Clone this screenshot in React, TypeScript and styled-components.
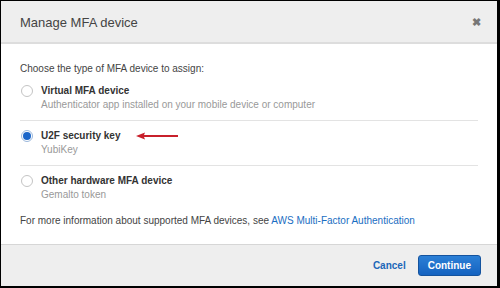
import React from "react";
import styled, { createGlobalStyle } from "styled-components";

const Global = createGlobalStyle`
  html, body {
    margin: 0;
    padding: 0;
    background: #000;
  }
  body {
    font-family: "Liberation Sans", Arial, sans-serif;
  }
`;

const Modal = styled.div`
  box-sizing: border-box;
  width: 500px;
  height: 288px;
  border-style: solid;
  border-color: #000;
  border-width: 1px 3px 2px 1px;
  background: #fff;
  display: flex;
  flex-direction: column;
`;

const Header = styled.div`
  height: 40px;
  background: #eeeeee;
  border-bottom: 2px solid #dddddd;
  display: flex;
  align-items: center;
  justify-content: space-between;
  padding: 1px 16px 0 19px;

  & h2 {
    margin: 0;
    font-weight: 400;
    font-size: 13px;
    color: #444;
  }
`;

const Close = styled.button`
  border: none;
  background: none;
  padding: 0;
  color: #777;
  font-size: 11px;
  font-weight: 700;
  line-height: 1;
  cursor: pointer;
`;

const Body = styled.div`
  flex: 1;
  padding: 18px 19px 0 19px;
  color: #444;
  font-size: 10px;
  line-height: 14px;

  & > p {
    margin: 0;
  }
`;

const Option = styled.label<{ $last?: boolean }>`
  display: flex;
  align-items: flex-start;
  gap: 8px;
  padding: 8px 0 8px 0;
  border-bottom: ${(p) => (p.$last ? "none" : "1px solid #e3e3e3")};
  position: relative;
`;

const Radio = styled.span<{ $checked?: boolean }>`
  box-sizing: border-box;
  width: 12px;
  height: 12px;
  margin-top: 1px;
  margin-left: 1px;
  border-radius: 50%;
  border: 1px solid ${(p) => (p.$checked ? "#9bb8dc" : "#c4c4c4")};
  background: #fff;
  display: flex;
  align-items: center;
  justify-content: center;

  &::after {
    content: "";
    display: ${(p) => (p.$checked ? "block" : "none")};
    width: 8px;
    height: 8px;
    border-radius: 50%;
    background: #1b66c9;
  }
`;

const OptionText = styled.div`
  display: flex;
  flex-direction: column;

  & strong {
    font-weight: 700;
    color: #333;
  }
  & span {
    color: #999;
  }
`;

const Pointer = styled.svg`
  position: absolute;
  left: 116px;
  top: 11px;
`;

const Info = styled.p`
  margin: 4px 0 0 0 !important;

  & a {
    color: #1a6ec2;
    text-decoration: none;
  }
`;

const Footer = styled.div`
  height: 41px;
  background: #eeeeee;
  border-top: 1px solid #d6d6d6;
  display: flex;
  align-items: center;
  justify-content: flex-end;
  gap: 12px;
  padding: 0 16px 0 0;
`;

const LinkButton = styled.button`
  border: none;
  background: none;
  color: #2066b8;
  font-family: inherit;
  font-size: 10px;
  font-weight: 700;
  padding: 0;
`;

const PrimaryButton = styled.button`
  box-sizing: border-box;
  height: 21px;
  padding: 0 9px;
  border-radius: 3px;
  border: 1px solid #14539e;
  background: linear-gradient(#2b7fd6, #1563c0);
  color: #fff;
  font-family: inherit;
  font-size: 10px;
  font-weight: 700;
`;

const options = [
  {
    title: "Virtual MFA device",
    sub: "Authenticator app installed on your mobile device or computer",
  },
  { title: "U2F security key", sub: "YubiKey", checked: true },
  { title: "Other hardware MFA device", sub: "Gemalto token" },
];

export default function App() {
  return (
    <>
      <Global />
      <Modal>
        <Header>
          <h2>Manage MFA device</h2>
          <Close aria-label="Close">✖</Close>
        </Header>
        <Body>
          <p>Choose the type of MFA device to assign:</p>
          {options.map((o, i) => (
            <Option key={o.title} $last={i === options.length - 1}>
              <Radio $checked={o.checked} />
              <OptionText>
                <strong>{o.title}</strong>
                <span>{o.sub}</span>
              </OptionText>
              {o.checked && (
                <Pointer width="42" height="8" viewBox="0 0 42 8">
                  <path d="M0 4 L9 0.5 L8 3 H42 V5 H8 L9 7.5 Z" fill="#c8202b" />
                </Pointer>
              )}
            </Option>
          ))}
          <Info>
            For more information about supported MFA devices, see{" "}
            <a href="#">AWS Multi-Factor Authentication</a>
          </Info>
        </Body>
        <Footer>
          <LinkButton>Cancel</LinkButton>
          <PrimaryButton>Continue</PrimaryButton>
        </Footer>
      </Modal>
    </>
  );
}
